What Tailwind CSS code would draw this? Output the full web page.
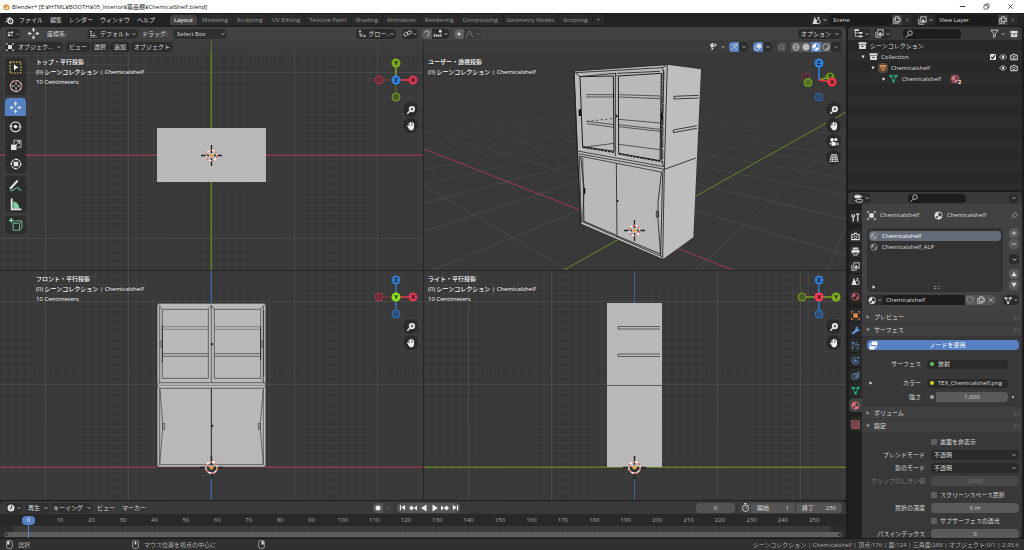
<!DOCTYPE html>
<html lang="ja">
<head>
  <meta charset="UTF-8">
  <meta name="viewport" content="width=device-width, initial-scale=1.0">
  <title>Blender* [E:¥HTML¥BOOTH¥05_Interior¥薬品棚¥ChemicalShelf.blend]</title>
  <script src="https://cdn.jsdelivr.net/npm/@tailwindcss/browser@4"></script>
</head>
<body class="h-screen flex flex-col overflow-hidden bg-[#1c1c1c] text-[#dcdcdc] text-[6px] leading-[10px] whitespace-nowrap font-['Open_Sans','Noto_Sans_CJK_JP',sans-serif] [&_use]:fill-none [&_use]:stroke-current [&_use]:[stroke-width:1.5]">

  <!-- icon sprite -->
  <svg class="absolute size-0">
      <symbol id="chev" viewBox="0 0 8 8"><path d="M1 2.500l3 3 3-3" stroke-width="1.500"/></symbol>
      <symbol id="x" viewBox="0 0 16 16"><path d="M3 3l10 10M13 3L3 13" stroke-width="1.600"/></symbol>
      <symbol id="plus" viewBox="0 0 16 16"><path d="M8 2v12M2 8h12" stroke-width="2.200"/></symbol>
      <symbol id="minus" viewBox="0 0 16 16"><path d="M2 8h12" stroke-width="2"/></symbol>
      <symbol id="check" viewBox="0 0 16 16"><path d="M3 8l4 4 6-9" stroke-width="3"/></symbol>
      <symbol id="restore" viewBox="0 0 16 16"><rect x="2" y="5" width="9" height="9" rx="2"/><path d="M5 5V4q0-2 2-2h5q2 0 2 2v5q0 2-2 2h-1"/></symbol>
      <symbol id="blender" viewBox="0 0 16 16"><circle cx="9.800" cy="9.300" r="4.200" stroke-width="2.400"/><circle cx="9.800" cy="9.300" r="1.400" fill="currentColor" stroke="none"/><path d="M1 11l7-6H3M7 2l5 3.500" stroke-width="1.800"/></symbol>
      <symbol id="editor" viewBox="0 0 16 16"><path d="M1 5h14M1 11h14M5 2v12M12 3v4" stroke-width="1.600"/><circle cx="12" cy="4" r="2.400" fill="currentColor" stroke="none"/><circle cx="5" cy="11" r="2.400" fill="currentColor" stroke="none"/></symbol>
      <symbol id="move" viewBox="0 0 24 24"><path d="M12 6v3M12 15v3M6 12h3M15 12h3" stroke-width="2"/><path d="M12 1l3.500 5h-7zM12 23l3.500-5h-7zM1 12l5-3.500v7zM23 12l-5-3.500v7z" fill="currentColor" stroke="none"/></symbol>
      <symbol id="axes" viewBox="0 0 16 16"><path d="M4 1v11h11M4 12l5-5" stroke-width="1.500"/><path d="M1.500 4L4 1l2.500 3M12 9.500l3 2.500-3 2.500"/></symbol>
      <symbol id="orient" viewBox="0 0 16 16"><path d="M4 2v9h9M2 4l2-2 2 2" stroke-width="1.600"/><path d="M3 14h2M8 14h2M13 14h2M9 7h2" stroke-width="2"/></symbol>
      <symbol id="link" viewBox="0 0 16 16"><rect x="1" y="6.500" width="8" height="5" rx="2.500" transform="rotate(-40 5 9)"/><rect x="7" y="4" width="8" height="5" rx="2.500" transform="rotate(-40 11 6)"/></symbol>
      <symbol id="magnet" viewBox="0 0 16 16"><path d="M3 5q5-5 8-1t-3 9" stroke-width="3"/></symbol>
      <symbol id="snap" viewBox="0 0 16 16"><path d="M1 12h14M2 8v6M6 9v5M10 9v5M14 8v6" stroke-width="1.400"/><circle cx="13" cy="4" r="2.500" fill="currentColor" stroke="none"/></symbol>
      <symbol id="dot" viewBox="0 0 16 16"><circle cx="8" cy="8" r="3" fill="currentColor" stroke="none"/><circle cx="8" cy="8" r="6" stroke-width=".8" opacity=".4"/></symbol>
      <symbol id="record" viewBox="0 0 16 16"><circle cx="8" cy="8" r="4" fill="currentColor" stroke="none"/></symbol>
      <symbol id="falloff" viewBox="0 0 16 16"><path d="M1 14c5 0 4-11 7-11s2 11 7 11" stroke-width="1.400"/></symbol>
      <symbol id="object" viewBox="0 0 16 16"><rect x="4" y="4" width="8" height="8" fill="currentColor" stroke="none"/><path d="M1 4V1h3M12 1h3v3M15 12v3h-3M4 15H1v-3"/></symbol>
      <symbol id="visible" viewBox="0 0 16 16"><path d="M2 4q6-4 12 1-5 6-11 3z" fill="currentColor" stroke="none"/><path d="M4 8l1 7 3-4" fill="currentColor" stroke="none"/><circle cx="9" cy="5" r="1.500" fill="#333" stroke="none"/></symbol>
      <symbol id="gizmo" viewBox="0 0 16 16"><path d="M2 3q8 1 11 11M2 14L14 2M9 2h5v5"/></symbol>
      <symbol id="overlay" viewBox="0 0 16 16"><circle cx="10" cy="6" r="5" fill="currentColor" stroke="none"/><circle cx="6" cy="10" r="4.500"/></symbol>
      <symbol id="xray" viewBox="0 0 16 16"><rect x="2" y="5" width="9" height="9"/><path d="M5 5V2h9v9h-3M5 5v6h6V5" stroke-dasharray="2 1"/></symbol>
      <symbol id="wire" viewBox="0 0 16 16"><circle cx="8" cy="8" r="6.500"/><ellipse cx="8" cy="8" rx="3" ry="6.500"/><path d="M1.500 8h13"/></symbol>
      <symbol id="solid" viewBox="0 0 16 16"><circle cx="8" cy="8" r="7" fill="currentColor" stroke="none"/></symbol>
      <symbol id="mat" viewBox="0 0 16 16"><circle cx="8" cy="8" r="6.500"/><path d="M8 1.500a6.500 6.500 0 00-6 9l6-2zM8 8.500l6 2a6.500 6.500 0 01-8 3.600z" fill="currentColor" stroke="none"/></symbol>
      <symbol id="render" viewBox="0 0 16 16"><circle cx="8" cy="8" r="6.500"/><path d="M12 3q2 8-7 10 7 3 9.500-5 0-3-2.500-5z" fill="currentColor" stroke="none"/></symbol>
      <symbol id="scene" viewBox="0 0 16 16"><path d="M5 1l5 13H1z" fill="currentColor" stroke="none"/><circle cx="11" cy="10" r="3.700"/><circle cx="11.500" cy="3" r="1.700" fill="currentColor" stroke="none"/></symbol>
      <symbol id="copy" viewBox="0 0 16 16"><path d="M5 1.500h6l3.500 3.500v6H5z"/><path d="M5 5H1.500v9.500h9V11M10 2v4h4"/></symbol>
      <symbol id="layers" viewBox="0 0 16 16"><rect x="5" y="1.500" width="9.500" height="9.500"/><path d="M1.500 5v9.500H11"/><path d="M6 10l3-5 4 5z" fill="currentColor" stroke="none"/></symbol>
      <symbol id="tree" viewBox="0 0 16 16"><path d="M2 1v12M2 7h5M2 13h5" stroke-width="1.400"/><path d="M1 2h8M8 7h7M8 13h7" stroke-width="3"/></symbol>
      <symbol id="search" viewBox="0 0 16 16"><circle cx="10" cy="6" r="4.500"/><path d="M7 9.500L1.500 15" stroke-width="2"/></symbol>
      <symbol id="funnel" viewBox="0 0 16 16"><path d="M1.500 2h13L9.500 8v5l-3 2V8z"/></symbol>
      <symbol id="archive" viewBox="0 0 16 16"><path d="M1 2h14v4H1zM2 7h12v7H2z" fill="currentColor" stroke="none"/><path d="M5.500 9.500h5" stroke="#333" stroke-width="1.500"/></symbol>
      <symbol id="eye" viewBox="0 0 16 16"><path d="M1 8q7-9 14 0-7 9-14 0z"/><circle cx="8" cy="8" r="2.500" fill="currentColor" stroke="none"/></symbol>
      <symbol id="photo" viewBox="0 0 16 16"><path d="M1.500 4.500H5l1-2h4l1 2h3.500v9h-13z" stroke-width="2"/><circle cx="8" cy="9" r="2.500"/></symbol>
      <symbol id="tri" viewBox="0 0 16 16"><path d="M2 3h12L8 14z" stroke-width="2"/><path d="M5 3h6L8 9z" fill="currentColor" stroke="none"/></symbol>
      <symbol id="mesh" viewBox="0 0 16 16"><path d="M3 3.500h10L8 13z"/><g fill="currentColor" stroke="none"><circle cx="3" cy="3.500" r="2.200"/><circle cx="13" cy="3.500" r="2.200"/><circle cx="8" cy="13" r="2.200"/></g></symbol>
      <symbol id="tool" viewBox="0 0 16 16"><path d="M4 15V8M2 2v4q2 3 4 0V2M12 7v8" stroke-width="2.200"/><path d="M9 2h6M12 2v5" stroke-width="2"/></symbol>
      <symbol id="printer" viewBox="0 0 16 16"><path d="M3 1h10v3H3zM1 5h14v6h-3V9H4v2H1z" fill="currentColor" stroke="none"/><path d="M5 9.500h6v5H5z"/></symbol>
      <symbol id="world" viewBox="0 0 16 16"><circle cx="8" cy="8" r="6.500"/><path d="M3 4q4-3 5 0t-1 4-5 1zM10 8q4-2 3 2t-4 3z" fill="currentColor" stroke="none"/></symbol>
      <symbol id="wrench" viewBox="0 0 16 16"><path d="M2 12l6-6q-1-5 5-5l-2 3 1 2 3-1q1 5-5 5l-6 5q-3 0-2-3z" fill="currentColor" stroke="none"/></symbol>
      <symbol id="particles" viewBox="0 0 16 16"><path d="M3 14L3 3l10 4M3 3l9 10" stroke-width="1.200"/><g fill="currentColor" stroke="none"><circle cx="3" cy="3" r="2"/><circle cx="13" cy="7" r="1.600"/><circle cx="12" cy="13" r="1.600"/><circle cx="3" cy="13" r="1.600"/><circle cx="10" cy="2" r="1.300"/></g></symbol>
      <symbol id="physics" viewBox="0 0 16 16"><circle cx="8" cy="8.500" r="6" stroke-dasharray="29 8"/><circle cx="8" cy="8.500" r="2.700" fill="currentColor" stroke="none"/><circle cx="13" cy="3" r="1.800" fill="currentColor" stroke="none"/></symbol>
      <symbol id="constraint" viewBox="0 0 16 16"><circle cx="6.500" cy="9.500" r="5"/><circle cx="8.500" cy="8" r="2.500"/><path d="M10 5l4-3v7q-2 5-5 5"/></symbol>
      <symbol id="checker" viewBox="0 0 16 16"><rect x="1.500" y="1.500" width="13" height="13"/><path d="M2 4h3M8 4h3M5 7h3M11 7h3M2 10h3M8 10h3M5 13h3M11 13h3" stroke-width="3"/></symbol>
      <symbol id="pin" viewBox="0 0 16 16"><path d="M9 2l5 5-2 1-2 3-1 1-5-5 3-1 2-3zM6 10l-4 4"/></symbol>
      <symbol id="props" viewBox="0 0 16 16"><rect x="1" y="2" width="11" height="5" rx="2.500" fill="currentColor"/><rect x="4" y="9.500" width="11" height="5" rx="2.500"/><path d="M13 4.500h2M1 12h2" stroke-width="2"/></symbol>
      <symbol id="shield" viewBox="0 0 16 16"><path d="M2 3q4 0 6-2 2 2 6 2 0 9-6 12Q2 12 2 3z"/></symbol>
      <symbol id="nodes" viewBox="0 0 16 16"><path d="M5 1h10v6H5zM1 9h9v6H1z" fill="currentColor" stroke="none"/><path d="M1 5h4M2 9V5M10 12h3V7"/></symbol>
      <symbol id="clock" viewBox="0 0 16 16"><circle cx="8" cy="8" r="7" fill="currentColor" stroke="none"/><path d="M9 3v5l-3 3" stroke="#333" stroke-width="2"/></symbol>
      <symbol id="stopwatch" viewBox="0 0 16 16"><circle cx="8" cy="9.500" r="5.500"/><path d="M8 4V1M5.500 1h5M8 9.500l3-3M12.500 4l2-1"/></symbol>
      <symbol id="start" viewBox="0 0 16 16"><path d="M2 2h2.500v12H2zM14 2v12L5 8z" fill="currentColor" stroke="none"/></symbol>
      <symbol id="key" viewBox="0 0 16 16"><path d="M5 3l5 5-5 5-5-5zM16 3v10l-6-5z" fill="currentColor" stroke="none"/></symbol>
      <symbol id="play" viewBox="0 0 16 16"><path d="M3 1l11 7-11 7z" fill="currentColor" stroke="none"/></symbol>
      <symbol id="up" viewBox="0 0 16 16"><path d="M8 2l7 12H1z" fill="currentColor" stroke="none"/></symbol>
      <symbol id="mouse" viewBox="0 0 16 16"><rect x="3" y="1" width="10" height="14" rx="3"/></symbol>
      <symbol id="boxsel" viewBox="0 0 24 24"><rect x="2" y="2" width="20" height="20" stroke="#c9b257" stroke-width="2" stroke-dasharray="3.500 2"/><path d="M9 6l9 7-5 .5L9.500 18z" fill="#fff" stroke="none"/></symbol>
      <symbol id="cursor" viewBox="0 0 24 24"><circle cx="12" cy="12" r="9.500" stroke-width="2"/><circle cx="12" cy="12" r="9.500" stroke="#b0595b" stroke-width="2" stroke-dasharray="4 4"/><path d="M12 5v5M12 14v5M5 12h5M14 12h5"/></symbol>
      <symbol id="rotate" viewBox="0 0 24 24"><path d="M3 10a9.500 9.500 0 0118 0M3 15a9.500 9.500 0 0018 0" stroke-width="2"/><circle cx="12" cy="12" r="3.200" fill="currentColor" stroke="none"/><path d="M0 10h7l-3 5zM24 14h-7l3-5z" fill="currentColor" stroke="none"/></symbol>
      <symbol id="scale" viewBox="0 0 24 24"><path d="M8 2.500h14v14M8 2.500v7M22 16.500h-7M12 12l7-7M14 5h5v5"/><rect x="2" y="11" width="11" height="11" fill="currentColor" stroke="none"/></symbol>
      <symbol id="transform" viewBox="0 0 24 24"><circle cx="12" cy="12" r="9.500" stroke-width="2" stroke-dasharray="10 5"/><rect x="7.500" y="7.500" width="9" height="9" fill="currentColor" stroke="none"/><path d="M12 0l3 4H9zM12 24l3-4H9zM0 12l4-3v6zM24 12l-4-3v6z" fill="currentColor" stroke="none"/></symbol>
      <symbol id="annotate" viewBox="0 0 24 24"><path d="M2 18L16 3" stroke-width="4"/><path d="M2 21c7 3 8-5 13-5 4 0 3 5 8 5" stroke="#6fb592" stroke-width="2"/></symbol>
      <symbol id="measure" viewBox="0 0 24 24"><path d="M8 6q11 2 11 14H8z" fill="#7fcfa6" stroke="none"/><path d="M5 1v20h18" stroke-width="3.500"/></symbol>
      <symbol id="addcube" viewBox="0 0 24 24"><path d="M7 9h11v12H7zM7 9l4-4h11v12l-4 4M18 9l4-4" stroke="#6fb592" stroke-width="1.700"/><path d="M4 0v8M0 4h8" stroke="#8fe0b5" stroke-width="2"/></symbol>
      <symbol id="zoom" viewBox="0 0 16 16"><circle cx="9.500" cy="6.500" r="5" fill="currentColor" stroke="none"/><path d="M6 10l-4 4" stroke-width="2.400"/><path d="M9.500 4v5M7 6.500h5" stroke="#333" stroke-width="1.300"/></symbol>
      <symbol id="hand" viewBox="0 0 16 16"><path d="M5 10V3.500M7.300 9V2M9.700 9V2M12 10V4M2.500 8l4 5" stroke-width="1.800" stroke-linecap="round"/><path d="M4.500 8h8.300q0 7-4 7-3 0-5-4z" fill="currentColor" stroke="none"/></symbol>
      <symbol id="movie" viewBox="0 0 16 16"><circle cx="5" cy="4.500" r="3" fill="currentColor" stroke="none"/><circle cx="11" cy="4" r="2.500" fill="currentColor" stroke="none"/><path d="M4 8h7v6H4zM11.500 11l3.500-2.500v5zM1 9h2v3H1z" fill="currentColor" stroke="none"/></symbol>
      <symbol id="persp" viewBox="0 0 16 16"><path d="M4 2.500h8l2.500 11h-13zM3 6.500h10M2 10h12M6.500 2.500l-1 11M9.500 2.500l1 11" stroke-width="1.200"/></symbol>
      <symbol id="origin" viewBox="0 0 32 32"><path d="M16 0v12M16 20v12M0 16h12M20 16h12" stroke="#222" stroke-width="2"/><circle cx="16" cy="16" r="8" stroke="#fff" stroke-width="1.800"/><circle cx="16" cy="16" r="8" stroke="#d8584d" stroke-width="1.800" stroke-dasharray="4.200 4.200"/><circle cx="16" cy="16" r="2.600" fill="#f0a040" stroke="none"/></symbol>
    <defs>
      <pattern id="gridTop" x="211" y="155" width="83" height="83" patternUnits="userSpaceOnUse" fill="none">
        <path d="M8.500 0v83M17.500 0v83M25.500 0v83M33.500 0v83M42.500 0v83M50.500 0v83M58.500 0v83M66.500 0v83M75.500 0v83M0 8.500h83M0 17.500h83M0 25.500h83M0 33.500h83M0 42.500h83M0 50.500h83M0 58.500h83M0 66.500h83M0 75.500h83" stroke="#404040"/>
        <path d="M.5 0v83M0 .5h83" stroke="#494949"/>
      </pattern>
      <pattern id="gridFront" href="#gridTop" y="467"/>
      <pattern id="gridSide" href="#gridTop" x="634" y="467"/>
      <linearGradient id="fade" x1="0" y1="95" x2="0" y2="220" gradientUnits="userSpaceOnUse"><stop offset="0" stop-color="#000"/><stop offset="1" stop-color="#fff"/></linearGradient>
      <mask id="fadeMask" maskUnits="userSpaceOnUse" x="424" y="40" width="422" height="230"><rect x="424" y="40" width="422" height="230" fill="url(#fade)"/></mask>
    </defs>
  </svg>

  <!-- title bar -->
  <header class="h-[13px] shrink-0 bg-white text-[#222] flex items-center pl-[2px] pr-[10px]">
    <svg class="size-2 text-[#e0822a]"><use href="#blender"/></svg>
    <h1 class="ml-[2px]">Blender* [E:¥HTML¥BOOTH¥05_Interior¥薬品棚¥ChemicalShelf.blend]</h1>
    <div class="ml-auto flex gap-[17px]">
      <button aria-label="最小化"><svg class="size-[7px]"><use href="#minus"/></svg></button>
      <button aria-label="元に戻す"><svg class="size-[7px]"><use href="#restore"/></svg></button>
      <button aria-label="閉じる"><svg class="size-[7px]"><use href="#x"/></svg></button>
    </div>
  </header>

  <!-- menu and workspaces -->
  <nav class="h-[14px] shrink-0 bg-[#232323] flex items-center pl-[5px] pr-[6px]">
    <svg class="size-[9px]"><use href="#blender"/></svg>
    <div class="ml-[5px] flex gap-[7px]">
      <button>ファイル</button><button>編集</button><button>レンダー</button><button>ウィンドウ</button><button>ヘルプ</button>
    </div>
    <div class="ml-[15px] flex gap-px self-end mb-[2px] text-[#999] *:h-[10px] *:px-1 *:rounded-t-sm *:bg-[#2b2b2b]">
      <button class="bg-[#444]! text-white">Layout</button><button>Modeling</button><button>Sculpting</button><button>UV Editing</button><button>Texture Paint</button><button>Shading</button><button>Animation</button><button>Rendering</button><button>Compositing</button><button>Geometry Nodes</button><button>Scripting</button><button>+</button>
    </div>
    <div class="ml-auto flex items-center h-[10px]">
      <button class="flex items-center gap-[2px] bg-[#2b2b2b] px-px h-full" aria-label="シーン"><svg class="size-[9px]"><use href="#scene"/></svg><svg class="size-1"><use href="#chev"/></svg></button>
      <input class="ml-[2px] w-[62px] h-full bg-[#1b1b1b] px-[3px] outline-none" aria-label="シーン名" value="Scene">
      <button class="size-[10px] bg-[#424242] grid place-items-center" aria-label="新規シーン"><svg class="size-2"><use href="#copy"/></svg></button>
      <button class="size-[10px] bg-[#2b2b2b] grid place-items-center text-[#777]" aria-label="シーン削除"><svg class="size-[6px]"><use href="#x"/></svg></button>
      <button class="ml-[5px] flex items-center gap-[2px] bg-[#2b2b2b] px-px h-full" aria-label="ビューレイヤー"><svg class="size-[9px]"><use href="#layers"/></svg><svg class="size-1"><use href="#chev"/></svg></button>
      <input class="ml-[2px] w-[62px] h-full bg-[#1b1b1b] px-[3px] outline-none" aria-label="ビューレイヤー名" value="View Layer">
      <button class="size-[10px] bg-[#424242] grid place-items-center" aria-label="新規レイヤー"><svg class="size-2"><use href="#copy"/></svg></button>
      <button class="size-[10px] bg-[#2b2b2b] grid place-items-center text-[#777]" aria-label="レイヤー削除"><svg class="size-[6px]"><use href="#x"/></svg></button>
    </div>
  </nav>

  <div class="flex-1 min-h-0 flex gap-[2px]">
    <main class="flex-1 min-w-0 flex flex-col">

      <!-- tool settings -->
      <div class="h-[13px] shrink-0 bg-[#424242] rounded-t-sm grid grid-cols-[1fr_auto_1fr] items-center pl-[6px] pr-1">
        <div class="flex items-center h-[10px]">
          <button class="flex items-center gap-[2px] bg-[#2b2b2b] rounded-sm px-px h-full w-[14px]" aria-label="エディタータイプ"><svg class="size-2"><use href="#editor"/></svg><svg class="size-1"><use href="#chev"/></svg></button>
          <svg class="ml-[7px] size-[13px]"><use href="#move"/></svg>
          <label for="orient-sel" class="ml-[7px] w-10">座標系:</label>
          <div class="flex items-center bg-[#2f2f2f] rounded-sm h-full px-[2px] w-[51px]">
            <svg class="size-2"><use href="#orient"/></svg>
            <select id="orient-sel" class="appearance-none flex-1 min-w-0 ml-[3px] outline-none"><option>デフォルト</option></select>
            <svg class="size-1"><use href="#chev"/></svg>
          </div>
          <label for="drag-sel" class="ml-[4px] w-[31px]">ドラッグ:</label>
          <div class="flex items-center bg-[#2f2f2f] rounded-sm h-full px-[2px] w-[54px]">
            <select id="drag-sel" class="appearance-none flex-1 min-w-0 ml-[2px] outline-none"><option>Select Box</option></select>
            <svg class="size-1"><use href="#chev"/></svg>
          </div>
        </div>
        <div class="flex items-center h-[10px] pr-3">
          <div class="flex items-center bg-[#2b2b2b] rounded-sm h-full px-[2px] w-10">
            <svg class="size-2"><use href="#axes"/></svg>
            <select aria-label="座標系" class="appearance-none flex-1 min-w-0 ml-[3px] outline-none"><option>グロー…</option></select>
            <svg class="size-1"><use href="#chev"/></svg>
          </div>
          <button class="ml-[6px] flex items-center gap-px bg-[#2b2b2b] rounded-sm px-px h-full" aria-label="ピボット"><svg class="size-[9px]"><use href="#link"/></svg><svg class="size-1"><use href="#chev"/></svg></button>
          <button class="ml-1 size-[10px] grid place-items-center bg-[#5a5a5a] rounded-l-sm text-[#999]" aria-label="スナップ"><svg class="size-2"><use href="#magnet"/></svg></button>
          <button class="flex items-center gap-[2px] bg-[#2b2b2b] rounded-r-sm px-px h-full" aria-label="スナップ対象"><svg class="size-[9px]"><use href="#snap"/></svg><svg class="size-1"><use href="#chev"/></svg></button>
          <button class="ml-[5px] size-[10px] grid place-items-center bg-[#5a5a5a] rounded-l-sm" aria-label="プロポーショナル編集"><svg class="size-2"><use href="#dot"/></svg></button>
          <button class="flex items-center gap-[2px] bg-[#3a3a3a] rounded-r-sm px-px h-full text-[#888]" aria-label="減衰"><svg class="size-[9px]"><use href="#falloff"/></svg><svg class="size-1"><use href="#chev"/></svg></button>
        </div>
        <button class="justify-self-end flex items-center gap-1 h-[10px] px-[3px] bg-[#2b2b2b] rounded-sm">オプション<svg class="size-1"><use href="#chev"/></svg></button>
      </div>

      <!-- quad view -->
      <div class="relative flex-1 min-h-0 grid grid-cols-[423fr_422fr] grid-rows-[230fr_229fr] gap-px bg-[#262626]">

        <section class="relative overflow-hidden bg-[#393939]">
          <svg class="absolute inset-0 size-full" viewBox="0 40 423 230" preserveAspectRatio="xMidYMid slice">
            <rect y="40" width="423" height="230" fill="url(#gridTop)"/>
            <rect y="154.500" width="423" height="1.500" fill="#8f3d4c"/>
            <rect x="210.500" y="40" width="1.500" height="230" fill="#5f7f28"/>
            <rect x="157" y="128" width="109" height="54" fill="#b8b8b8"/>
            <use href="#origin" x="201" y="145" width="21" height="21"/>
          </svg>
          <div class="absolute left-9 top-[17px] font-medium text-white text-shadow-sm">
            <p>トップ・平行投影</p><p>(0) シーンコレクション | Chemicalshelf</p><p>10 Centimeters</p>
          </div>
          <div class="absolute left-[5px] top-[18px] w-[21px] flex flex-col gap-[3px] text-[#e6e6e6]">
            <div class="flex flex-col gap-px bg-[#2d2d2d] rounded-sm *:h-[18px] *:grid *:place-items-center">
              <button aria-label="ボックス選択"><svg class="size-[13px]"><use href="#boxsel"/></svg></button>
              <button aria-label="カーソル"><svg class="size-[14px]"><use href="#cursor"/></svg></button>
            </div>
            <div class="flex flex-col gap-px bg-[#2d2d2d] rounded-sm *:h-[18px] *:grid *:place-items-center">
              <button class="bg-[#5680c2] rounded-t-sm" aria-label="移動"><svg class="size-[13px]"><use href="#move"/></svg></button>
              <button aria-label="回転"><svg class="size-[13px]"><use href="#rotate"/></svg></button>
              <button aria-label="スケール"><svg class="size-3"><use href="#scale"/></svg></button>
              <button aria-label="トランスフォーム"><svg class="size-3"><use href="#transform"/></svg></button>
            </div>
            <div class="flex flex-col gap-px bg-[#2d2d2d] rounded-sm *:h-[18px] *:grid *:place-items-center">
              <button aria-label="アノテート"><svg class="size-[13px]"><use href="#annotate"/></svg></button>
              <button aria-label="メジャー"><svg class="size-[13px]"><use href="#measure"/></svg></button>
            </div>
            <button class="h-[18px] grid place-items-center bg-[#2d2d2d] rounded-sm" aria-label="立方体を追加"><svg class="size-[14px]"><use href="#addcube"/></svg></button>
          </div>
          <div class="absolute right-[5px] top-[18px] flex flex-col items-end gap-px">
            <svg class="size-11 -mb-px" viewBox="0 0 44 44" text-anchor="middle" font-size="6" font-weight="bold" fill="#111">
              <path d="M5 22h17" stroke="#87303e"/><path d="M22 22h17" stroke="#e8374f" stroke-width="1.500"/><path d="M22 5v17" stroke="#7aa51e" stroke-width="1.500"/><path d="M22 22v17" stroke="#55701f"/>
              <circle cx="5" cy="22" r="4" fill="#6a3039" stroke="#b23347"/><circle cx="22" cy="39" r="4" fill="#4b5c28" stroke="#78a022"/>
              <circle cx="22" cy="5" r="4.500" fill="#7cad1c"/><circle cx="39" cy="22" r="4.500" fill="#d63a50"/><circle cx="22" cy="22" r="4.500" fill="#2f83e3"/>
              <text x="22" y="7">Y</text><text x="39" y="24">X</text><text x="22" y="24">Z</text>
            </svg>
            <button class="size-[15px] rounded-full bg-[#2a2a2a] grid place-items-center text-[#eee]" aria-label="ズーム"><svg class="size-[10px]"><use href="#zoom"/></svg></button>
            <button class="size-[15px] rounded-full bg-[#2a2a2a] grid place-items-center text-[#eee]" aria-label="視点移動"><svg class="size-[10px]"><use href="#hand"/></svg></button>
          </div>
        </section>

        <section class="relative overflow-hidden bg-[#393939]">
          <svg class="absolute inset-0 size-full" viewBox="424 40 422 230" preserveAspectRatio="xMidYMid slice" fill="none">
            <g mask="url(#fadeMask)">
              <path stroke="#4c4c4c" d="M234 75L-257 270M234 75L-92 270M234 75L73 270M234 75L238 270M234 75L403 270M234 75L568 270M234 75L898 270M234 75L1063 270M234 75L1228 270M234 75L1393 270M234 75L1558 270M234 75L1723 270M234 75L1888 270M234 75L2053 270M234 75L2218 270M234 75L2383 270"/>
              <path stroke="#4c4c4c" d="M912 75L958 270M912 75L827 270M912 75L695 270M912 75L433 270M912 75L302 270M912 75L171 270M912 75L40 270M912 75L-91 270M912 75L-222 270M912 75L-353 270M912 75L-484 270M912 75L-615 270M912 75L-746 270M912 75L-877 270"/>
            </g>
            <path d="M424 149L733 270" stroke="#9c3f50"/>
            <path d="M846 112L564 270" stroke="#668829"/>
            <!-- cabinet, drawn at three units per pixel -->
            <g transform="translate(560 50) scale(.33333)" stroke-linejoin="round">
              <path d="M42 63L322 44 423 58 408 324 400 562 308 628 62 522z" fill="#b9b9b9" stroke="#222" stroke-width="2.500"/>
              <path d="M322 44L423 58 400 562 308 628z" fill="#bebebe"/>
              <g stroke="#1f1f1f" stroke-width="2.500">
                <path d="M322 44L313 358 308 628M42 63L52 305 62 522M313 358L408 324"/>
                <path d="M46 68L306 53 318 47M46 68L60 80 163 70 172 78M306 53L312 66 303 332 311 348M166 68L166 318M171 70L300 64"/>
                <path d="M60 80L160 78 162 304 68 290z M175 78L304 70 300 332 176 310z" stroke-width="3"/>
                <path d="M306 70L304 330M310 60L308 340" stroke-dasharray="30 4"/>
                <path d="M68 292L162 307M176 312L300 334" stroke-width="4" stroke-dasharray="8 3"/>
                <path d="M78 134h84M78 141h84v-7M176 134l126 4M176 141l126 5M80 214l82 10M80 221l82 11M176 208l124 11M176 224l124 14M176 230l124 14M70 292l92-12M176 283l124 16" stroke-width="2"/>
                <path d="M80 214l82-9" stroke-dasharray="7 7" stroke-width="2"/>
                <path d="M416 136L342 139v8l74-3M411 227l-71 13v8l71-13"/>
                <path d="M52 303L313 350M54 311L311 357M58 318L308 367 311 357M58 318L64 514M68 323L72 514" stroke-width="2.200"/>
                <path d="M169 340L171 562M62 320l10 90v20l-4 80" stroke-width="2.500"/>
                <path d="M304 368l-10 90 0 50 8 108M308 368L302 616M63 513L306 620M68 512L170 556M172 558L302 612"/>
                <path d="M289 484h6v17h-6z"/>
              </g>
              <path d="M56 178h7v20h-7zM71 414h5v17h-5zM303 190h5v18h-5zM167 194h5v8h-5zM171 450h4v6h-4z" fill="#111"/>
            </g>
            <use href="#origin" x="624" y="220" width="21" height="21"/>
          </svg>
          <div class="absolute left-1 top-[17px] font-medium text-white text-shadow-sm">
            <p>ユーザー・透視投影</p><p>(0) シーンコレクション | Chemicalshelf</p>
          </div>
          <div class="absolute right-[5px] top-[18px] flex flex-col items-end gap-px">
            <svg class="size-11 -mb-px" viewBox="0 0 44 44" text-anchor="middle" font-size="6" font-weight="bold" fill="#111">
              <circle cx="9" cy="19" r="4" fill="#45303a" stroke="#87303e"/>
              <circle cx="22" cy="39" r="4" fill="#2c4a6c" stroke="#2d67a8"/>
              <path d="M22 22l10-3" stroke="#7cad1c" stroke-width="1.500"/><path d="M22 22V5" stroke="#2f83e3" stroke-width="1.500"/><path d="M22 22l13 2" stroke="#f0384f" stroke-width="1.500"/>
              <circle cx="33" cy="19" r="4.500" fill="#6a9420"/><circle cx="11" cy="24.500" r="4" fill="#55732a" stroke="#7cad1c"/>
              <circle cx="22" cy="5" r="4.500" fill="#2f83e3"/><circle cx="35" cy="24" r="4.500" fill="#f0384f"/>
              <text x="22" y="7">Z</text><text x="33" y="20">Y</text><text x="35" y="26">X</text>
            </svg>
            <button class="size-[15px] rounded-full bg-[#2a2a2a] grid place-items-center text-[#eee]" aria-label="ズーム"><svg class="size-[10px]"><use href="#zoom"/></svg></button>
            <button class="size-[15px] rounded-full bg-[#2a2a2a] grid place-items-center text-[#eee]" aria-label="視点移動"><svg class="size-[10px]"><use href="#hand"/></svg></button>
            <button class="size-[15px] rounded-full bg-[#2a2a2a] grid place-items-center text-[#eee]" aria-label="カメラ視点"><svg class="size-[10px]"><use href="#movie"/></svg></button>
            <button class="size-[15px] rounded-full bg-[#2a2a2a] grid place-items-center text-[#eee]" aria-label="透視/平行"><svg class="size-[10px]"><use href="#persp"/></svg></button>
          </div>
        </section>

        <section class="relative overflow-hidden bg-[#393939]">
          <svg class="absolute inset-0 size-full" viewBox="0 271 423 229" preserveAspectRatio="xMidYMid slice" fill="none">
            <rect y="271" width="423" height="229" fill="url(#gridFront)"/>
            <rect y="466.500" width="423" height="1.500" fill="#8f3d4c"/>
            <rect x="210.500" y="271" width="1.500" height="229" fill="#3a6496"/>
            <rect x="157" y="303" width="109" height="164" fill="#b8b8b8"/>
            <g transform="translate(140 270) scale(.33333)" stroke="#3a3a3a" stroke-width="2">
              <path d="M51 100h327v492H51z" stroke="#222"/>
              <path d="M59 108V338M370 108V338M59 355V584M370 355V584M59 584h311M51 100l16 18M378 100l-16 18M51 592l8-8M378 592l-8-8"/>
              <path d="M67 118h138v207H67zM223 118h139v207H223z"/>
              <path d="M205 118l9-12 9 12M214 106v232M56 338h317M51 346l8-8M378 346l-8-8M51 346l8 9h311l8-9M362 325l14 14"/>
              <path d="M58 346h314" stroke="#777"/>
              <path d="M67 170h138M67 178h138M223 170h139M223 178h139" stroke="#666"/>
              <path d="M67 251h138M67 259h138M223 251h139M223 259h139"/>
              <path d="M67 165v112M362 170v100M371 120v200" stroke="#111"/>
              <path d="M60 214h6v16h-6zM363 214h6v16h-6zM68 460h6v18h-6zM355 460h6v18h-6z"/>
              <path d="M214 355v232" stroke="#222" stroke-width="3"/>
              <path d="M60 358l8 100v20l-9 104M370 358l-9 100v20l9 104"/>
              <path d="M214 220h5v5h-5zM214 465h5v5h-5z" fill="#111"/>
            </g>
            <use href="#origin" x="200" y="456" width="23" height="23"/>
          </svg>
          <div class="absolute left-9 top-[3px] font-medium text-white text-shadow-sm">
            <p>フロント・平行投影</p><p>(0) シーンコレクション | Chemicalshelf</p><p>10 Centimeters</p>
          </div>
          <div class="absolute right-[5px] top-[4px] flex flex-col items-end gap-px">
            <svg class="size-11 -mb-px" viewBox="0 0 44 44" text-anchor="middle" font-size="6" font-weight="bold" fill="#111">
              <path d="M5 22h17" stroke="#87303e"/><path d="M22 22h17" stroke="#e8374f" stroke-width="1.500"/><path d="M22 5v34" stroke="#2f74c0" stroke-width="1.500"/>
              <circle cx="5" cy="22" r="4" fill="#6a3039" stroke="#b23347"/><circle cx="22" cy="39" r="4" fill="#2f4f78" stroke="#2f74c0"/>
              <circle cx="22" cy="5" r="4.500" fill="#2f78cc"/><circle cx="39" cy="22" r="4.500" fill="#d63a50"/><circle cx="22" cy="22" r="4.500" fill="#8ee01c"/>
              <text x="22" y="7">Z</text><text x="39" y="24">X</text><text x="22" y="24">Y</text>
            </svg>
            <button class="size-[15px] rounded-full bg-[#2a2a2a] grid place-items-center text-[#eee]" aria-label="ズーム"><svg class="size-[10px]"><use href="#zoom"/></svg></button>
            <button class="size-[15px] rounded-full bg-[#2a2a2a] grid place-items-center text-[#eee]" aria-label="視点移動"><svg class="size-[10px]"><use href="#hand"/></svg></button>
          </div>
        </section>

        <section class="relative overflow-hidden bg-[#393939]">
          <svg class="absolute inset-0 size-full" viewBox="424 271 422 229" preserveAspectRatio="xMidYMid slice" fill="none">
            <rect x="424" y="271" width="422" height="229" fill="url(#gridSide)"/>
            <rect x="424" y="466.500" width="422" height="1.500" fill="#5f7f28"/>
            <rect x="634" y="271" width="1" height="229" fill="#3a6496"/>
            <rect x="607" y="303" width="55" height="164" fill="#b8b8b8"/>
            <g stroke="#444" stroke-width=".8"><path d="M660 326.500h-42v2.500h42M660 354h-42v2.500h42M607 385.500h55"/></g>
            <use href="#origin" x="623" y="456" width="23" height="23"/>
          </svg>
          <div class="absolute left-1 top-[3px] font-medium text-white text-shadow-sm">
            <p>ライト・平行投影</p><p>(0) シーンコレクション | Chemicalshelf</p><p>10 Centimeters</p>
          </div>
          <div class="absolute right-[5px] top-[4px] flex flex-col items-end gap-px">
            <svg class="size-11 -mb-px" viewBox="0 0 44 44" text-anchor="middle" font-size="6" font-weight="bold" fill="#111">
              <path d="M5 22h34" stroke="#7aa51e" stroke-width="1.500"/><path d="M22 5v34" stroke="#2f74c0" stroke-width="1.500"/>
              <circle cx="5" cy="22" r="4" fill="#4b5c28" stroke="#78a022"/><circle cx="22" cy="39" r="4" fill="#2f4f78" stroke="#2f74c0"/>
              <circle cx="22" cy="5" r="4.500" fill="#2f78cc"/><circle cx="39" cy="22" r="4.500" fill="#7cad1c"/><circle cx="22" cy="22" r="4.500" fill="#ff3a55"/>
              <text x="22" y="7">Z</text><text x="39" y="24">Y</text><text x="22" y="24">X</text>
            </svg>
            <button class="size-[15px] rounded-full bg-[#2a2a2a] grid place-items-center text-[#eee]" aria-label="ズーム"><svg class="size-[10px]"><use href="#zoom"/></svg></button>
            <button class="size-[15px] rounded-full bg-[#2a2a2a] grid place-items-center text-[#eee]" aria-label="視点移動"><svg class="size-[10px]"><use href="#hand"/></svg></button>
          </div>
        </section>

        <!-- viewport header, floats over the views -->
        <div class="absolute inset-x-0 top-0 h-[13px] flex items-center px-[5px] bg-[#424242]/40">
          <div class="flex items-center gap-px h-[10px] *:h-full *:bg-[#2d2d2d] *:rounded-sm">
            <div class="flex items-center px-px w-[58px] mr-[2px]">
              <svg class="size-2"><use href="#object"/></svg>
              <select aria-label="モード" class="appearance-none flex-1 min-w-0 ml-1 outline-none"><option>オブジェク…</option></select>
              <svg class="size-1 mr-px"><use href="#chev"/></svg>
            </div>
            <button class="px-[3px]">ビュー</button><button class="px-[3px]">選択</button><button class="px-1">追加</button><button class="px-[3px]">オブジェクト</button>
          </div>
          <div class="ml-auto flex items-center h-[10px]">
            <button class="flex items-center gap-[3px]" aria-label="表示設定"><svg class="size-[9px]"><use href="#visible"/></svg><svg class="size-1"><use href="#chev"/></svg></button>
            <button class="ml-1 size-[10px] grid place-items-center bg-[#5680c2] rounded-l-sm" aria-label="ギズモ"><svg class="size-2"><use href="#gizmo"/></svg></button>
            <button class="h-full w-[9px] grid place-items-center bg-[#2d2d2d] rounded-r-sm" aria-label="ギズモ設定"><svg class="size-1"><use href="#chev"/></svg></button>
            <button class="ml-[5px] size-[10px] grid place-items-center bg-[#5680c2] rounded-l-sm" aria-label="オーバーレイ"><svg class="size-2"><use href="#overlay"/></svg></button>
            <button class="h-full w-[9px] grid place-items-center bg-[#2d2d2d] rounded-r-sm" aria-label="オーバーレイ設定"><svg class="size-1"><use href="#chev"/></svg></button>
            <button class="ml-[5px] size-[10px] grid place-items-center bg-[#484848] rounded-sm text-[#777]" aria-label="透過表示"><svg class="size-2"><use href="#xray"/></svg></button>
            <div class="ml-1 flex *:size-[10px] *:grid *:place-items-center *:bg-[#555] text-[#bbb]">
              <button aria-label="ワイヤーフレーム"><svg class="size-2"><use href="#wire"/></svg></button>
              <button aria-label="ソリッド"><svg class="size-2"><use href="#solid"/></svg></button>
              <button class="bg-[#5680c2]! text-white" aria-label="マテリアルプレビュー"><svg class="size-2"><use href="#mat"/></svg></button>
              <button aria-label="レンダー"><svg class="size-2"><use href="#render"/></svg></button>
              <button class="bg-[#2d2d2d]!" aria-label="シェーディング設定"><svg class="size-1"><use href="#chev"/></svg></button>
            </div>
          </div>
        </div>
      </div>

      <!-- timeline -->
      <div class="mt-px shrink-0 bg-[#393939] rounded-sm overflow-hidden">
        <div class="h-[13px] flex items-center pl-[6px] pr-1">
          <button class="flex items-center gap-[2px] h-[10px] bg-[#2d2d2d] rounded-sm px-px" aria-label="エディタータイプ"><svg class="size-2"><use href="#clock"/></svg><svg class="size-1"><use href="#chev"/></svg></button>
          <div class="ml-1 flex items-center gap-px *:h-[10px]">
            <button class="flex items-center gap-1 bg-[#303030] rounded-sm px-[2px]">再生<svg class="size-1"><use href="#chev"/></svg></button>
            <button class="flex items-center gap-1 bg-[#303030] rounded-sm px-[2px]">キーイング<svg class="size-1"><use href="#chev"/></svg></button>
            <button class="px-[3px]">ビュー</button>
            <button class="px-[3px]">マーカー</button>
          </div>
          <div class="mx-auto pr-3 flex text-[#eee] *:h-[10px] *:w-[10px] *:grid *:place-items-center *:bg-[#555]">
            <button class="rounded-l-sm" aria-label="自動キー"><svg class="size-[10px]"><use href="#record"/></svg></button>
            <button class="bg-[#3f3f3f]! text-[#777] mr-1" aria-label="自動キー設定"><svg class="size-1"><use href="#chev"/></svg></button>
            <button class="rounded-l-sm" aria-label="先頭へ"><svg class="size-[7px]"><use href="#start"/></svg></button>
            <button class="w-[11px]!" aria-label="前のキー"><svg class="size-2"><use href="#key"/></svg></button>
            <button class="w-[11px]!" aria-label="逆再生"><svg class="size-2 rotate-180"><use href="#play"/></svg></button>
            <button class="w-[11px]!" aria-label="再生"><svg class="size-2"><use href="#play"/></svg></button>
            <button aria-label="次のキー"><svg class="size-2 rotate-180"><use href="#key"/></svg></button>
            <button class="rounded-r-sm" aria-label="末尾へ"><svg class="size-[7px] rotate-180"><use href="#start"/></svg></button>
          </div>
          <div class="flex items-center h-[10px] *:h-full">
            <input class="w-[39px] bg-[#545454] rounded-sm text-center outline-none" aria-label="現在のフレーム" value="0">
            <button class="ml-1 w-3 grid place-items-center bg-[#424242] rounded-l-sm" aria-label="プレビュー範囲"><svg class="size-[9px]"><use href="#stopwatch"/></svg></button>
            <label class="w-11 flex items-center justify-between bg-[#545454] px-[6px] mr-px">開始<input class="w-5 text-right outline-none" value="1"></label>
            <label class="w-[46px] flex items-center justify-between bg-[#545454] rounded-r-sm px-[6px]">終了<input class="w-5 text-right outline-none" value="250"></label>
          </div>
        </div>
        <div class="relative">
          <div id="ruler" class="h-3 bg-[#282828] grid grid-cols-[repeat(26,1fr)] items-center text-center text-[#a8a8a8] pl-[13px] pr-4"></div>
          <div class="bg-[#2d2d2d] pb-px">
            <div id="ticks" class="h-[6px] grid grid-cols-[repeat(26,1fr)] pl-[13px] pr-4"></div>
            <div class="mx-1 h-[5px] rounded-full bg-[#5e5e5e] flex items-center justify-between px-px">
              <span class="size-[3px] rounded-full bg-[#333]"></span><span class="size-[3px] rounded-full bg-[#333]"></span>
            </div>
          </div>
          <div class="absolute left-[22px] top-[2px] w-[13px] h-[22px] flex flex-col items-center">
            <span class="w-full h-[9px] rounded-sm bg-[#5680c2] text-white text-center leading-[9px]">0</span>
            <span class="w-px flex-1 bg-[#5680c2]"></span>
          </div>
        </div>
      </div>
    </main>

    <aside class="w-[176px] shrink-0 flex flex-col gap-[2px] pr-[2px]">

      <!-- outliner -->
      <section class="h-[163px] shrink-0 bg-[#282828] rounded-sm overflow-hidden">
        <div class="h-[13px] bg-[#393939] flex items-center pl-[5px] pr-[3px]">
          <button class="flex items-center gap-[2px] h-[10px] bg-[#2b2b2b] rounded-sm px-px" aria-label="エディタータイプ"><svg class="size-[9px]"><use href="#tree"/></svg><svg class="size-1"><use href="#chev"/></svg></button>
          <button class="ml-1 flex items-center gap-[2px] h-[10px] bg-[#2b2b2b] rounded-sm px-px" aria-label="表示モード"><svg class="size-[9px]"><use href="#layers"/></svg><svg class="size-1"><use href="#chev"/></svg></button>
          <label class="ml-3 w-[58px] h-[10px] flex items-center bg-[#1d1d1d] rounded-sm px-[2px]"><svg class="size-2 shrink-0"><use href="#search"/></svg><input type="search" aria-label="検索" class="w-full min-w-0 outline-none"></label>
          <button class="ml-auto flex items-center gap-[2px]" aria-label="フィルター"><svg class="size-[9px]"><use href="#funnel"/></svg><svg class="size-1"><use href="#chev"/></svg></button>
          <button class="ml-1 size-[10px] grid place-items-center bg-[#4a4a4a] rounded-sm" aria-label="新規コレクション"><svg class="size-2"><use href="#archive"/></svg></button>
        </div>
        <ul class="h-full bg-[repeating-linear-gradient(#282828_0_11px,#2c2c2c_11px_22px)] *:h-[11px] *:flex *:items-center *:gap-[3px] *:pr-1">
          <li class="pl-[10px]"><svg class="size-[9px]"><use href="#archive"/></svg><span>シーンコレクション</span></li>
          <li class="pl-[13px]"><svg class="size-1 rotate-180 mr-px"><use href="#up"/></svg><svg class="size-[9px]"><use href="#archive"/></svg><span>Collection</span>
            <span class="ml-auto flex items-center gap-[3px]"><label class="grid *:col-start-1 *:row-start-1"><input type="checkbox" checked aria-label="Collection を有効化" class="appearance-none size-[6px] bg-[#e6e6e6] rounded-[1px]"><svg class="size-[6px] text-[#222]"><use href="#check"/></svg></label><svg class="size-2"><use href="#eye"/></svg><svg class="size-2"><use href="#photo"/></svg></span></li>
          <li class="pl-[23px]"><svg class="size-1 rotate-180"><use href="#up"/></svg><svg class="size-[10px] p-px bg-[#5c4a3c] rounded-sm text-[#e79658]"><use href="#tri"/></svg><span>Chemicalshelf</span>
            <span class="ml-auto flex items-center gap-[3px]"><svg class="size-2"><use href="#eye"/></svg><svg class="size-2"><use href="#photo"/></svg></span></li>
          <li class="pl-[34px]"><svg class="size-1 rotate-90"><use href="#up"/></svg><svg class="size-[9px] text-[#1fb582]"><use href="#mesh"/></svg><span class="ml-px">Chemicalshelf</span><span class="ml-[6px] relative"><svg class="size-[10px] p-px bg-[#553a3d] rounded-sm text-[#d97a80]"><use href="#mat"/></svg><b class="absolute -right-px -bottom-[2px] text-[5px] leading-[8px] text-white">2</b></span></li>
        </ul>
      </section>

      <!-- properties -->
      <section class="flex-1 min-h-0 bg-[#383838] rounded-sm overflow-hidden flex flex-col">
        <div class="h-3 shrink-0 bg-[#393939] flex items-center pl-[5px] pr-1">
          <button class="flex items-center gap-[2px] h-[10px] bg-[#2b2b2b] rounded-sm px-px" aria-label="エディタータイプ"><svg class="size-[9px]"><use href="#props"/></svg><svg class="size-1"><use href="#chev"/></svg></button>
          <label class="ml-[38px] w-[58px] h-[9px] flex items-center bg-[#1d1d1d] rounded-sm px-[2px]"><svg class="size-2 shrink-0"><use href="#search"/></svg><input type="search" aria-label="プロパティ検索" class="w-full min-w-0 outline-none"></label>
          <button class="ml-auto size-[9px] grid place-items-center bg-[#2b2b2b] rounded-sm" aria-label="オプション"><svg class="size-1"><use href="#chev"/></svg></button>
        </div>
        <div class="flex-1 min-h-0 flex">
          <div class="w-[14px] shrink-0 bg-[#1f1f1f] pt-[6px] pl-px flex flex-col gap-px *:h-[14px] *:shrink-0 *:grid *:place-items-center *:bg-[#2a2a2a] *:rounded-l-sm">
            <button class="mb-1" aria-label="ツール"><svg class="size-[9px]"><use href="#tool"/></svg></button>
            <button aria-label="レンダー"><svg class="size-[9px]"><use href="#photo"/></svg></button>
            <button aria-label="出力"><svg class="size-[9px]"><use href="#printer"/></svg></button>
            <button aria-label="ビューレイヤー"><svg class="size-[9px]"><use href="#layers"/></svg></button>
            <button aria-label="シーン"><svg class="size-[9px]"><use href="#scene"/></svg></button>
            <button class="mb-1 text-[#c25a62]" aria-label="ワールド"><svg class="size-[9px]"><use href="#world"/></svg></button>
            <button class="text-[#e0884a]" aria-label="オブジェクト"><svg class="size-[9px]"><use href="#object"/></svg></button>
            <button class="text-[#6a96d8]" aria-label="モディファイアー"><svg class="size-[9px]"><use href="#wrench"/></svg></button>
            <button class="text-[#5a80b4]" aria-label="パーティクル"><svg class="size-[9px]"><use href="#particles"/></svg></button>
            <button class="text-[#5a90cc]" aria-label="物理演算"><svg class="size-[9px]"><use href="#physics"/></svg></button>
            <button class="text-[#6a8cc4]" aria-label="コンストレイント"><svg class="size-[9px]"><use href="#constraint"/></svg></button>
            <button class="text-[#1fb582]" aria-label="データ"><svg class="size-[9px]"><use href="#mesh"/></svg></button>
            <button class="mb-1 bg-[#424242]! text-[#e0707a]" aria-label="マテリアル"><svg class="size-[9px]"><use href="#mat"/></svg></button>
            <button class="text-[#c2606a]" aria-label="テクスチャ"><svg class="size-[9px]"><use href="#checker"/></svg></button>
          </div>

          <div class="flex-1 min-w-0 overflow-hidden">
            <div class="bg-[#424242] pl-[5px] pr-[3px] pb-[6px]">
              <div class="h-[22px] flex items-center">
                <svg class="size-[9px]"><use href="#object"/></svg><span class="ml-1">Chemicalshelf</span>
                <span class="ml-[5px] text-[#777]">›</span>
                <svg class="ml-2 size-[9px]"><use href="#mat"/></svg><span class="ml-1">Chemicalshelf</span>
                <button class="ml-auto text-[#999]" aria-label="ピン"><svg class="size-[9px]"><use href="#pin"/></svg></button>
              </div>
              <div class="mt-[2px] flex gap-[6px]">
                <div class="flex-1 h-16 flex flex-col bg-[#333] rounded-sm px-[2px] pt-[3px]">
                  <button class="h-[10px] flex items-center gap-1 bg-[#646b78] rounded-sm px-px text-white"><svg class="size-2 text-[#999]"><use href="#mat"/></svg>Chemicalshelf</button>
                  <button class="h-3 flex items-center gap-1 px-px"><svg class="size-2 text-[#999]"><use href="#world"/></svg>Chemicalshelf_ALP</button>
                  <div class="mt-auto mb-[3px] flex items-center px-[3px]"><svg class="size-1 rotate-90"><use href="#up"/></svg><span class="mx-auto w-[6px] h-[3px] border-y border-dotted border-[#888]"></span></div>
                </div>
                <div class="w-[10px] flex flex-col gap-px *:h-[10px] *:grid *:place-items-center *:bg-[#5a5a5a] *:rounded-sm">
                  <button aria-label="スロット追加"><svg class="size-[6px]"><use href="#plus"/></svg></button>
                  <button aria-label="スロット削除"><svg class="size-[6px]"><use href="#minus"/></svg></button>
                  <button class="my-1 bg-[#2b2b2b]!" aria-label="スロット操作"><svg class="size-[5px]"><use href="#chev"/></svg></button>
                  <button aria-label="上へ"><svg class="size-[6px]"><use href="#up"/></svg></button>
                  <button aria-label="下へ"><svg class="size-[6px] rotate-180"><use href="#up"/></svg></button>
                </div>
              </div>
              <div class="mt-[3px] h-[10px] flex *:h-full">
                <button class="w-4 flex items-center gap-[2px] bg-[#2b2b2b] rounded-l-sm px-px" aria-label="マテリアル選択"><svg class="size-[9px]"><use href="#mat"/></svg><svg class="size-1"><use href="#chev"/></svg></button>
                <input class="flex-1 min-w-0 bg-[#1d1d1d] px-[3px] outline-none" aria-label="マテリアル名" value="Chemicalshelf">
                <button class="w-[10px] grid place-items-center bg-[#565656] text-[#999]" aria-label="フェイクユーザー"><svg class="size-2"><use href="#shield"/></svg></button>
                <button class="w-[11px] grid place-items-center bg-[#565656]" aria-label="複製"><svg class="size-2"><use href="#copy"/></svg></button>
                <button class="w-[10px] grid place-items-center bg-[#565656] rounded-r-sm" aria-label="リンク解除"><svg class="size-[6px]"><use href="#x"/></svg></button>
                <button class="ml-[7px] w-4 flex items-center gap-[2px] bg-[#2b2b2b] rounded-sm px-px" aria-label="リンク先"><svg class="size-[9px]"><use href="#mesh"/></svg><svg class="size-1"><use href="#chev"/></svg></button>
              </div>
            </div>

            <h2 class="h-3 mb-px flex items-center gap-1 bg-[#404040] pl-1 pr-[2px]"><svg class="size-1 rotate-90 text-[#999]"><use href="#up"/></svg>プレビュー<span class="ml-auto w-[6px] h-[3px] border-y border-dotted border-[#666]"></span></h2>
            <h2 class="h-3 flex items-center gap-1 bg-[#404040] pl-1 pr-[2px]"><svg class="size-1 rotate-180 text-[#999]"><use href="#up"/></svg>サーフェス<span class="ml-auto w-[6px] h-[3px] border-y border-dotted border-[#666]"></span></h2>
            <div class="h-[71px] pt-1 pl-[5px] pr-[3px]">
              <button class="w-full h-[10px] flex items-center bg-[#5680c2] rounded-sm px-[2px] text-white"><svg class="size-[9px]"><use href="#nodes"/></svg><span class="flex-1">ノードを使用</span></button>
              <div class="mt-[9px] flex items-center h-[10px]"><span class="w-[54px] text-right mr-[6px]">サーフェス</span><button class="flex-1 mr-[11px] h-[9px] leading-[9px] flex items-center gap-1 bg-[#2a2a2a] rounded-sm px-[3px]"><i class="size-1 rounded-full bg-[#63c763]"></i>放射</button></div>
              <div class="mt-[9px] flex items-center h-[10px]"><svg class="ml-[2px] size-1 rotate-90"><use href="#up"/></svg><span class="w-12 text-right mr-[6px]">カラー</span><button class="flex-1 mr-[11px] h-[9px] leading-[9px] flex items-center gap-1 bg-[#2a2a2a] rounded-sm px-[3px]"><i class="size-1 rounded-full bg-[#d8d02c]"></i>TEX_Chemicalshelf.png</button></div>
              <div class="mt-1 flex items-center h-[10px]"><label for="strength" class="w-[54px] text-right mr-[6px]">強さ</label><i class="size-1 ml-[3px] mr-[2px] rounded-full bg-[#a1a1a1]"></i><input id="strength" class="flex-1 min-w-0 h-full bg-[#5a5a5a] rounded-r-sm text-center outline-none" value="1.000"><i class="size-[2px] ml-1 mr-[5px] rounded-full bg-[#ccc]"></i></div>
            </div>
            <h2 class="h-3 mb-px flex items-center gap-1 bg-[#404040] pl-1 pr-[2px]"><svg class="size-1 rotate-90 text-[#999]"><use href="#up"/></svg>ボリューム<span class="ml-auto w-[6px] h-[3px] border-y border-dotted border-[#666]"></span></h2>
            <h2 class="h-3 flex items-center gap-1 bg-[#404040] pl-1 pr-[2px]"><svg class="size-1 rotate-180 text-[#999]"><use href="#up"/></svg>設定<span class="ml-auto w-[6px] h-[3px] border-y border-dotted border-[#666]"></span></h2>
            <div class="pt-[5px] pl-[5px] pr-[3px] flex flex-col gap-[3px] *:h-[10px] *:shrink-0 *:flex *:items-center">
              <label class="pl-16 gap-[3px]"><input type="checkbox" class="appearance-none size-[6px] bg-[#5f5f5f] rounded-[1px]">裏面を非表示</label>
              <div><label for="blend" class="w-[58px] text-right mr-[6px]">ブレンドモード</label><span class="flex-1 h-full flex items-center bg-[#2a2a2a] rounded-sm px-[3px]"><select id="blend" class="appearance-none flex-1 outline-none"><option>不透明</option></select><svg class="size-1"><use href="#chev"/></svg></span></div>
              <div><label for="shadow" class="w-[58px] text-right mr-[6px]">影のモード</label><span class="flex-1 h-full flex items-center bg-[#2a2a2a] rounded-sm px-[3px]"><select id="shadow" class="appearance-none flex-1 outline-none"><option>不透明</option></select><svg class="size-1"><use href="#chev"/></svg></span></div>
              <div class="text-[#7c7c7c]"><label for="clip" class="w-[58px] text-right mr-[6px]">クリップのしきい値</label><input id="clip" class="flex-1 min-w-0 h-full bg-[#484848] rounded-sm text-center outline-none" value="0.000" disabled></div>
              <label class="pl-16 gap-[3px] mt-px"><input type="checkbox" class="appearance-none size-[6px] bg-[#5f5f5f] rounded-[1px]">スクリーンスペース屈折</label>
              <div><label for="depth" class="w-[58px] text-right mr-[6px]">屈折の深度</label><input id="depth" class="flex-1 min-w-0 h-full bg-[#5a5a5a] rounded-sm text-center outline-none" value="0 m"></div>
              <label class="pl-16 gap-[3px]"><input type="checkbox" class="appearance-none size-[6px] bg-[#5f5f5f] rounded-[1px]">サブサーフェスの透光</label>
              <div><label for="pass" class="w-[58px] text-right mr-[6px]">パスインデックス</label><input id="pass" class="flex-1 min-w-0 h-full bg-[#5a5a5a] rounded-sm text-center outline-none" value="0"></div>
            </div>
          </div>
        </div>
      </section>
    </aside>
  </div>

  <!-- status bar -->
  <footer class="h-[11px] mt-px shrink-0 bg-[#303030] flex items-center pl-[5px] pr-[5px] text-[#a8a8a8]">
    <div class="w-[126px] flex items-center gap-1"><svg class="size-[9px]" viewBox="0 0 16 16"><use href="#mouse"/><path d="M4 2h4v6H4z" fill="#ddd"/></svg>選択</div>
    <div class="w-[126px] flex items-center gap-1"><svg class="size-[9px]" viewBox="0 0 16 16"><use href="#mouse"/><path d="M6.500 3h3v5h-3z" fill="#ddd"/></svg>マウス位置を視点の中心に</div>
    <svg class="size-[9px]" viewBox="0 0 16 16"><use href="#mouse"/><path d="M8 2h4v6H8z" fill="#ddd"/></svg>
    <p class="ml-auto">シーンコレクション | Chemicalshelf | 頂点:176 | 面:124 | 三角面:288 | オブジェクト:0/1 | 2.93.6</p>
  </footer>

  <script>
    // frame numbers and tick marks on the timeline
    const ruler = document.getElementById('ruler');
    const ticks = document.getElementById('ticks');
    for (let frame = 0; frame <= 250; frame += 10) {
      const mark = document.createElement('span');
      mark.textContent = frame;
      ruler.appendChild(mark);
      const tick = document.createElement('span');
      tick.className = 'bg-[linear-gradient(90deg,#3b3b3b_15px,#2e2e2e_15px_16px,#3b3b3b_16px)]';
      ticks.appendChild(tick);
    }
  </script>
</body>
</html>
